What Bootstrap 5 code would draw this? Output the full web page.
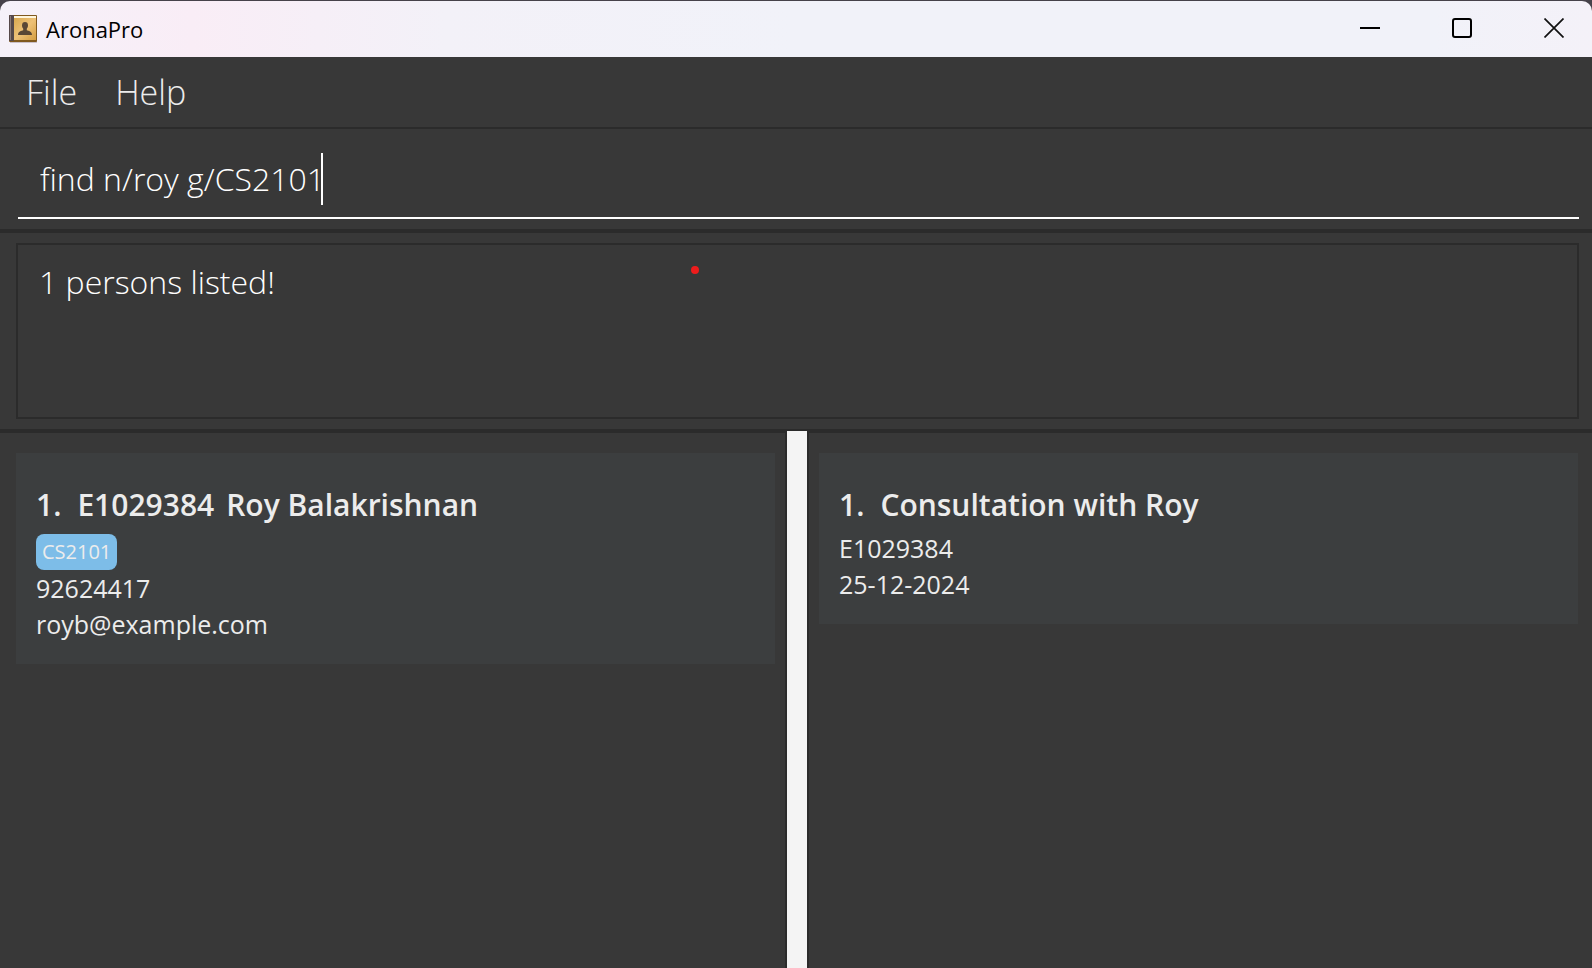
<!DOCTYPE html>
<html lang="en">
<head>
<meta charset="utf-8">
<meta name="viewport" content="width=device-width, initial-scale=1">
<title>AronaPro</title>
<link href="https://cdn.jsdelivr.net/npm/bootstrap@5.3.0/dist/css/bootstrap.min.css" rel="stylesheet">
<style>
  :root { --pane: #383838; --edge: #2b2b2b; --ink: #ececec; }
  body { background: #46424a; color: var(--ink); font-family: "Open Sans", "Noto Sans", sans-serif; }
  .titlebar {
    height: 56px; margin-top: 1px; padding-left: 9px; color: #000;
    border-radius: 10px 10px 0 0;
    background: linear-gradient(90deg, #f5f1f9 0, #f9edf6 12%, #f3f1f8 28%, #f1f2f9 50%, #f1f2f9 90%, #f4f1f8 100%);
  }
  .app-name { font-size: 22px; line-height: 32px; }
  .win-btn { width: 92px; height: 56px; border: 0; background: none; color: #000; padding: 0 0 2px 16px; }
  .menubar { height: 72px; padding: 0 7px; background: var(--pane); border-bottom: 2px solid var(--edge); }
  .menu-btn { border: 0; background: none; color: var(--ink); font-size: 34px; font-weight: 300; line-height: 48px; padding: 0 19px; }
  .command { padding: 14px 13px 10px 18px; background: var(--pane); border-bottom: 4px solid var(--edge); }
  .command-input {
    height: 76px; padding: 0 22px 4px; border: 0; border-bottom: 2px solid #fff; border-radius: 0; outline: 0;
    background: transparent; color: #fff; font-size: 32px; font-weight: 300; line-height: 52px;
  }
  .caret { left: 303px; top: 10px; width: 2px; height: 52px; background: #fff; }
  .result { padding: 10px 13px 10px 16px; background: var(--pane); border-bottom: 4px solid var(--edge); }
  .result-box { height: 176px; padding: 11px 21px; border: 2px solid var(--edge); color: #fff; font-size: 32px; font-weight: 300; line-height: 52px; }
  .pointer-dot { left: 43.2%; top: 21px; width: 8px; height: 8px; background: #ee1c1c; }
  .pane { flex: 1 1 0; min-width: 0; padding-top: 20px; background: var(--pane); }
  .pane-start { padding-left: 16px; padding-right: 10px; border-right: 2px solid var(--edge); }
  .pane-end { padding-left: 10px; padding-right: 14px; border-left: 2px solid var(--edge); }
  .divider { width: 20px; margin-top: -2px; background: #f4f4f4; z-index: 1; }
  .entry { padding: 30px 20px 22px; background: #3c3e3f; font-size: 25px; line-height: 36px; }
  .entry-title { font-size: 30px; font-weight: 600; line-height: 44px; margin: 0 0 3px; }
  .group-tag { height: 36px; padding: 0 6px; margin: 4px 0 0; border-radius: 8px; background: #7dbde8; font-size: 20px; line-height: 36px; }
</style>
</head>
<body class="min-vh-100 d-flex flex-column">
  <header class="titlebar d-flex align-items-center flex-shrink-0">
    <svg width="29" height="30" viewBox="0 0 29 30" aria-hidden="true">
      <defs><linearGradient id="cover" x1="0" y1="0" x2="1" y2="1"><stop offset="0" stop-color="#d9a94f"/><stop offset=".5" stop-color="#edc177"/><stop offset="1" stop-color="#d49d42"/></linearGradient></defs>
      <rect x="1" y="27" width="27" height="2" fill="#c9bfc9"/>
      <rect x="0" y="1" width="28" height="27" rx="1" fill="#80591f"/>
      <rect x="5" y="2" width="22" height="2" fill="#fff6dc"/>
      <rect x="5" y="4" width="22" height="22" fill="url(#cover)"/>
      <rect x="0" y="1" width="5" height="26" rx="1" fill="#55494a"/>
      <rect x="1" y="2" width="1" height="24" fill="#8b7b78"/>
      <path d="M16 8c2 0 3 1 3 3.500 0 1.500-.7 2.500-1.200 3.200v1.600c1.700.8 5.200 1 5.200 4.700H9c0-3.700 3.500-3.900 5.200-4.700v-1.600C13.700 14 13 13 13 11.500 13 9 14 8 16 8z" fill="#594735"/>
    </svg>
    <span class="app-name ms-2 me-auto">AronaPro</span>
    <button class="win-btn d-flex align-items-center justify-content-center" type="button" aria-label="Minimize">
      <svg width="20" height="20"><path d="M0 10h20" stroke="#000" stroke-width="2"/></svg>
    </button>
    <button class="win-btn d-flex align-items-center justify-content-center" type="button" aria-label="Maximize">
      <svg width="20" height="20"><rect x="1" y="1" width="18" height="18" rx="2" fill="none" stroke="#000" stroke-width="2"/></svg>
    </button>
    <button class="win-btn d-flex align-items-center justify-content-center" type="button" aria-label="Close">
      <svg width="20" height="20"><path d="M.5.5l19 19M19.500.5l-19 19" stroke="#111" stroke-width="1.700"/></svg>
    </button>
  </header>

  <nav class="menubar d-flex align-items-center flex-shrink-0">
    <button class="menu-btn" type="button">File</button>
    <button class="menu-btn" type="button">Help</button>
  </nav>

  <section class="command">
    <div class="position-relative">
      <input class="command-input d-block w-100" type="text" aria-label="Command" value="find n/roy g/CS2101">
      <span class="caret position-absolute"></span>
    </div>
  </section>

  <section class="result">
    <div class="result-box position-relative" role="status">1 persons listed!
      <span class="pointer-dot position-absolute rounded-circle"></span>
    </div>
  </section>

  <main class="d-flex flex-grow-1">
    <section class="pane pane-start" aria-label="Persons">
      <article class="entry">
        <h2 class="entry-title d-flex"><span class="me-3">1.</span><span class="me-2 pe-1">E1029384</span><span>Roy Balakrishnan</span></h2>
        <div class="d-flex"><span class="group-tag">CS2101</span></div>
        <div>92624417</div>
        <div>royb@example.com</div>
      </article>
    </section>
    <div class="divider" role="separator"></div>
    <section class="pane pane-end" aria-label="Consultations">
      <article class="entry">
        <h2 class="entry-title d-flex"><span class="me-3">1.</span><span>Consultation with Roy</span></h2>
        <div>E1029384</div>
        <div>25-12-2024</div>
      </article>
    </section>
  </main>
  <script src="https://cdn.jsdelivr.net/npm/bootstrap@5.3.0/dist/js/bootstrap.bundle.min.js"></script>
</body>
</html>
